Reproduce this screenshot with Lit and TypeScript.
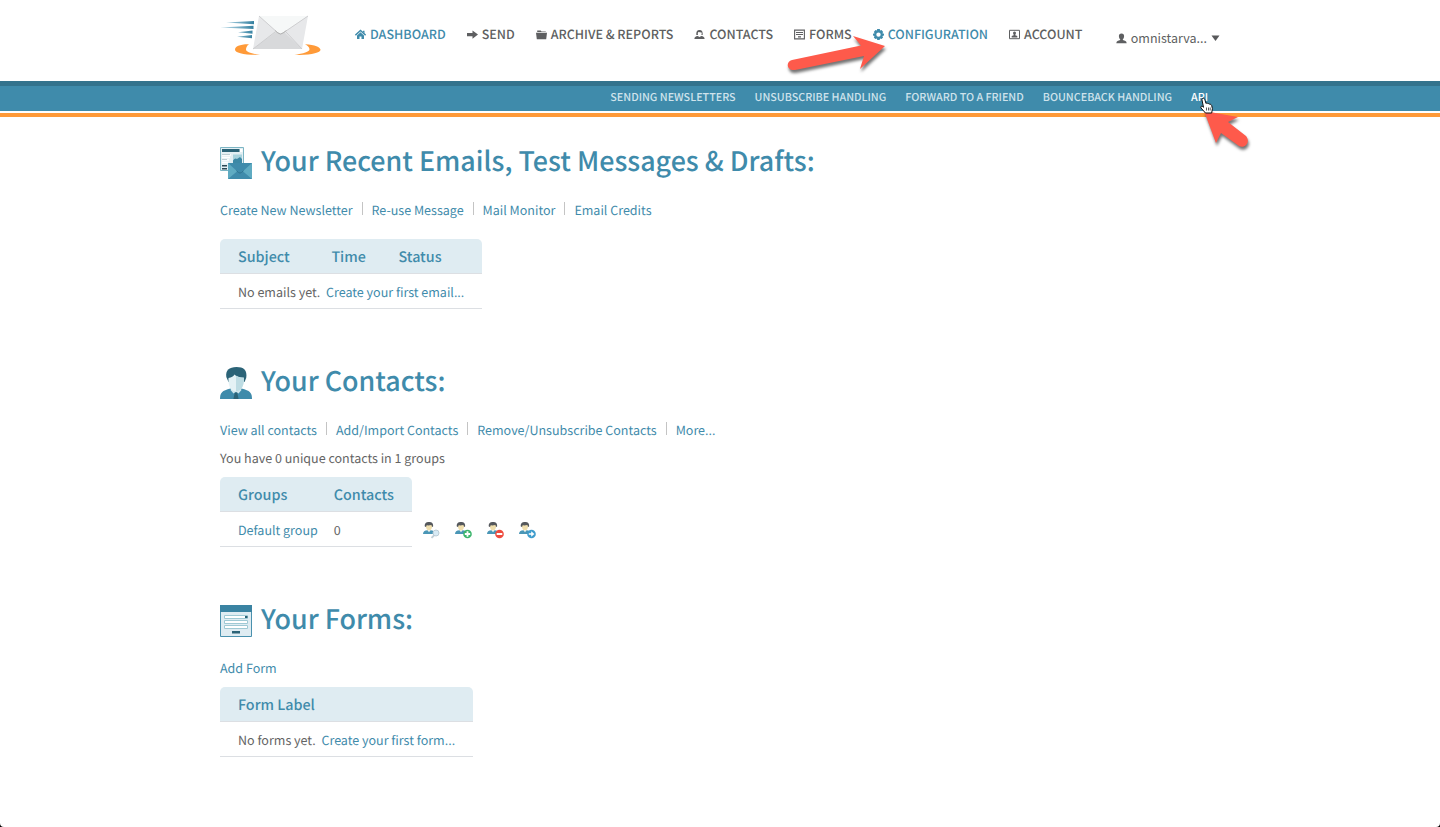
import { LitElement, html, css, svg } from "lit";
import { customElement } from "lit/decorators.js";

const icons = {
  home: svg`<path d="M0.400 6.200 5.500 1.400 10.600 6.200" fill="none" stroke="currentColor" stroke-width="1.400"/><path d="M8 1.800h1.500v2.500l-1.500-1.400zM2 6.400 5.500 3.200 9 6.400V10H6.500V7.500h-2V10H2z"/>`,
  send: svg`<path d="M0 4h5.500V1.400L11 5.600 5.500 9.800V7.200H0z"/>`,
  archive: svg`<path d="M1.200 3V1.400h3.500l.8 1h4.300V3zM0 3.800h11L10.200 10.200H.8z"/>`,
  contacts: svg`<path d="M2.300 6C2 2.800 3 .9 5.500.9s3.500 1.900 3.200 5.100H7.300c.5-1 .5-2 .2-2.600L4.500 3c-.9.700-.8 2-.4 3zM.4 10c0-1.900 1.200-2.700 3.300-3l1.800.9 1.800-.9c2.100.3 3.300 1.100 3.300 3z"/>`,
  forms: svg`<path d="M.6 1.100h9.800v8.800H.6z" fill="none" stroke="currentColor" stroke-width="1.100"/><path d="M2 3h7v1H2zM2 5h7v1H2zM4 7.200h3v1.200H4z"/>`,
  gear: svg`<path fill-rule="evenodd" d="M4.200 0h2.600l.3 1.500 1.400-.6 1.700 2-.9 1.300L11 4.800v1.600l-1.600.6.7 1.500L8.500 10l-1.400-.6-.5 1.600H4.300l-.5-1.600-1.400.6L.8 8.500 1.500 7 0 6.400V4.800l1.700-.6L.8 2.900l1.700-2 1.400.6zM5.500 3.400a2.200 2.200 0 1 0 0 4.400 2.200 2.200 0 0 0 0-4.400z"/>`,
  account: svg`<path d="M.5 1.300h10v8.400H.5z" fill="none" stroke="currentColor"/><circle cx="5.500" cy="4.100" r="1.500"/><path d="M4.700 5h1.600v1.200l2 .7v1.600H2.700V6.900l2-.7z"/>`,
  user: svg`<path d="M5.500.4c1.800 0 2.700 1.200 2.600 2.900-.1 1.500-.6 2.500-1.300 3.100v.6c2 .5 3.700.9 3.900 3.200H.3C.5 7.900 2.200 7.500 4.200 7v-.6C3.500 5.800 3 4.800 2.900 3.300 2.800 1.600 3.700.4 5.500.4z"/>`,
};

const NAV = [
  { label: "DASHBOARD", icon: icons.home, active: true },
  { label: "SEND", icon: icons.send },
  { label: "ARCHIVE & REPORTS", icon: icons.archive },
  { label: "CONTACTS", icon: icons.contacts },
  { label: "FORMS", icon: icons.forms },
  { label: "CONFIGURATION", icon: icons.gear, active: true },
  { label: "ACCOUNT", icon: icons.account },
];

const SUBNAV = [
  { label: "SENDING NEWSLETTERS" },
  { label: "UNSUBSCRIBE HANDLING" },
  { label: "FORWARD TO A FRIEND" },
  { label: "BOUNCEBACK HANDLING" },
  { label: "API", current: true },
];

const glyph = (content: unknown) =>
  html`<svg class="glyph" viewBox="0 0 11 11" aria-hidden="true">${content}</svg>`;

const person = (badge: unknown) => html`
  <svg viewBox="0 0 18 18" width="18" height="18" aria-hidden="true">
    <path d="M1 13c0-2.500 1.500-3.500 4.500-3.800h3C11.500 9.500 12.500 10.500 12.500 13z" fill="#4a96b6" />
    <path d="M5.500 9 7 11.300 8.500 9z" fill="#fff" />
    <path d="M3.800 4.500C3.800 2.500 5 2 7 2s3.200.8 3.200 2.500C10.200 7.500 8.800 9.600 7 9.600S3.800 7.500 3.800 4.500z" fill="#f0dfae" />
    <path d="M2.800 5.500C2.400 2.200 4.200 1 7 1s4.500 1.200 4.100 4.500L10 6c0-1-.3-1.600-.8-2-1.500.5-3.700.5-4.500.3L4 6z" fill="#55585c" />
    ${badge}
  </svg>
`;

const BADGES = [
  {
    label: "Search contacts",
    art: svg`<path d="m9.500 16.800 3-2.800" stroke="#c2ced5" stroke-width="1.800"/><circle cx="14" cy="12" r="3" fill="#d8eaf4" stroke="#bccdd6"/>`,
  },
  {
    label: "Add contacts",
    art: svg`<circle cx="13.500" cy="13" r="4.300" fill="#3cb56c"/><path d="M13.500 10.300v5.400M10.800 13h5.400" stroke="#fff" stroke-width="1.800"/>`,
  },
  {
    label: "Remove contacts",
    art: svg`<circle cx="13.500" cy="13" r="4.300" fill="#ee4b3e"/><path d="M10.700 13h5.600" stroke="#fff" stroke-width="2"/>`,
  },
  {
    label: "Move contacts",
    art: svg`<circle cx="13.500" cy="13" r="4.300" fill="#3f9ccc"/><path d="M10.800 12.200h2.400v-2l3.200 2.800-3.200 2.800v-2h-2.400z" fill="#fff"/>`,
  },
];

@customElement("app-root")
export class AppRoot extends LitElement {
  static styles = css`
    /* Sizes are set for Source Sans Pro; the adjust value keeps its x-height in the fallback. */
    :host {
      display: block;
      position: relative;
      min-height: 100vh;
      background: #fff;
      color: #646464;
      font-family: "Source Sans Pro", "Noto Sans CJK SC", "Noto Sans", sans-serif;
      font-size: 14px;
      font-size-adjust: 0.486;
      line-height: 28px;
      text-rendering: geometricPrecision;
    }
    a {
      color: #3f8bab;
      text-decoration: none;
    }
    svg {
      display: block;
      flex: none;
    }
    .wrap {
      box-sizing: border-box;
      max-width: 1000px;
      margin: 0 auto;
      position: relative;
    }
    .top {
      display: flex;
      align-items: flex-start;
      height: 81px;
    }
    .logo {
      margin-right: 34px;
      padding-top: 15px;
    }
    .nav {
      display: flex;
      gap: 21px;
      padding-top: 20px;
      font-weight: 500;
      white-space: nowrap;
    }
    .nav a,
    .user {
      display: flex;
      align-items: center;
      gap: 4px;
      color: #5e5f61;
    }
    .nav a.active {
      color: #3f8bab;
    }
    .glyph {
      width: 11px;
      height: 11px;
      fill: currentColor;
    }
    .user {
      margin: 24px 0 0 auto;
      padding: 0;
      border: 0;
      background: none;
      font: inherit;
      font-size-adjust: inherit;
      cursor: pointer;
      white-space: nowrap;
    }
    .bar {
      background: #3f8bab;
      border-top: 5px solid #34738d;
      border-bottom: 4px solid #ff9a38;
      box-shadow: inset 0 -2px #fff;
    }
    .subnav {
      display: flex;
      justify-content: flex-end;
      gap: 19px;
      padding: 0 12px 4px 0;
      font-size: 12px;
      font-weight: 500;
      line-height: 23px;
      white-space: nowrap;
    }
    .subnav a {
      color: #cfe3ec;
    }
    .subnav a.current {
      color: #fff;
    }
    .pointer-config,
    .pointer-api,
    .cursor {
      position: absolute;
      pointer-events: none;
      z-index: 2;
    }
    .pointer-config {
      left: 562px;
      top: 30px;
    }
    .pointer-api {
      left: 980px;
      top: 20px;
    }
    .cursor {
      left: 979px;
      top: 11px;
    }
    section {
      margin-bottom: 58px;
    }
    main {
      padding-top: 30px;
    }
    h2 {
      display: flex;
      gap: 9px;
      margin: 0 0 17px;
      color: #3f8bab;
      font-size: 30px;
      font-weight: 500;
      line-height: 26px;
    }
    .links {
      display: flex;
    }
    .links a + a {
      display: flex;
    }
    .links a + a::before {
      content: "";
      width: 1px;
      height: 13px;
      margin: 6px 9px 0;
      background: #c4c4c4;
    }
    p {
      margin: 0;
    }
    table {
      margin-top: 5px;
      border-collapse: separate;
      border-spacing: 0;
      white-space: nowrap;
    }
    table.spaced {
      margin-top: 15px;
    }
    th,
    td {
      padding: 2px 8px 0;
      border-bottom: 1px solid #dcdfe3;
      text-align: left;
      line-height: 32px;
    }
    th {
      background: #dfecf2;
      color: #3f8bab;
      font-size: 16px;
      font-weight: 500;
    }
    .first {
      padding-left: 18px;
    }
    .last {
      padding-right: 18px;
    }
    th.first {
      border-top-left-radius: 5px;
    }
    th.last {
      border-top-right-radius: 5px;
    }
    td a.after {
      margin-left: 3px;
    }
    td.tools {
      padding: 0 0 0 10px;
      border: 0;
    }
    .toolrow {
      display: flex;
      gap: 14px;
    }
    .corner {
      position: absolute;
      bottom: 0;
    }
    .corner.left {
      left: 0;
    }
    .corner.right {
      right: 0;
    }
  `;

  private logo() {
    return html`
      <a class="logo" href="#" aria-label="Home">
        <svg width="101" height="42" viewBox="0 0 101 42">
          <defs>
            <linearGradient id="speed">
              <stop offset="0" stop-color="#6fb0cc" stop-opacity="0.5" />
              <stop offset="1" stop-color="#337f9f" />
            </linearGradient>
          </defs>
          <path d="M6 7.600 34 6V9.300zM0 12.500 33.500 10.700v3.300zM18 17.200l14.500-1.800v3.300zM17 21.700l15-1.800v3.300z" fill="url(#speed)" />
          <path d="M29 29.200C20 29 15 31.500 15 34.500c0 3.500 9 5.600 25 5.300-8-1-14-2.800-14-5.300 0-2 1-4 3-5.300z" fill="#ff9a38" />
          <path d="M85 29.200c10 .5 15.500 3 15.500 5.600 0 3.200-10 5.600-26 5 9-1.200 15-3 15-5.500 0-2-2-4-4.500-5.100z" fill="#ff9a38" />
          <path d="M39 1h49l-6 33H33z" fill="#e7e8ea" />
          <path d="m33 34 23-17h8l18 17z" fill="#d8d9db" />
          <path d="M39 1h49L63 18q-2.500 2-5 0z" fill="#f6f8f8" />
          <path d="m39 1 19 17q2.500 2 5 0L88 1M33 34l22-17M82 34 66 17" fill="none" stroke="#c9cacc" stroke-width="0.900" />
          <path d="m55 15.500 3 2.500q2.500 2 5 0l3.500-2.500" fill="none" stroke="#b4b4b4" />
        </svg>
      </a>
    `;
  }

  private newsletterIcon() {
    return html`
      <svg width="32" height="32" viewBox="0 0 32 32" aria-hidden="true">
        <path d="M.5.500h23v23H.5z" fill="#e3eff3" stroke="#7cb5c4" />
        <path d="M2 2h17.500v3H2z" fill="#2b6377" />
        <path d="M20 2h2.500v3H20z" fill="#fff" />
        <path d="M2 8h9M2 13h7M2 10.500h8M2 15.500h6" stroke="#fff" stroke-width="1.500" />
        <path d="M2 7.500h8M2 12.500h5" stroke="#a3bac2" stroke-width="0.700" />
        <path d="M13 7.500h9V16h-9z" fill="#a9d3dd" />
        <path d="M13 13.500q2-3 4-1.500l3-2 2 2v4h-9z" fill="#3c88a5" />
        <path d="M2 18h5v1.500H2zM2 21h5v1.500H2z" fill="#2b4854" />
        <path d="M8 16h24v16H8z" fill="#5fabc2" />
        <path d="m8 32 9.500-8h5L32 32z" fill="#3f8bab" />
        <path d="m8 16 10.500 9.500q1.500 1.200 3 0L32 16z" fill="#3f8bab" />
        <path d="m16.500 23.700 2 1.800q1.500 1.200 3 0l2-1.800" fill="none" stroke="#2f7390" />
      </svg>
    `;
  }

  private contactIcon() {
    return html`
      <svg width="32" height="32" viewBox="0 0 32 32" aria-hidden="true">
        <path d="M0 32c0-6 2-8.500 10.500-10.500h11C30 23.500 32 26 32 32z" fill="#3f8bab" />
        <path d="M12 20h8l1.500 3-3 3.500L16 25l-2.500 1.500-3-3.500z" fill="#cfe6ec" />
        <path d="M14.800 25.500h2.400l1.400 6.500h-5.200z" fill="#2b6377" />
        <path d="M6.300 10C5.300 3.500 9 0 16.500 0 23.500 0 27.500 3 26.200 11L24.500 15h-16z" fill="#2b6377" />
        <path d="M8.500 11c3-.5 5-1.700 6-3.500 1.500 2 5 3 9.500 3.300.3 6.500-2 11-4 12.200-2.500 1.600-5.500 1.600-8 0-2-1.200-4-6-3.500-12z" fill="#e4f2f5" />
        <path d="M16 8.700c2 1.300 4.500 1.900 8 2.100.3 6.500-2 11-4 12.200q-2 1.200-4 1.200z" fill="#bddce3" />
      </svg>
    `;
  }

  private formIcon() {
    return html`
      <svg width="32" height="32" viewBox="0 0 32 32" aria-hidden="true">
        <path d="M.5.500h31v31H.5z" fill="#dfecf2" stroke="#4a91ae" />
        <path d="M0 0h32v7H0z" fill="#3a83a2" />
        <path d="M4.500 10.500h23v3h-23zM4.500 15.500h23v3h-23zM4.500 20.500h23v3h-23z" fill="#fff" stroke="#9fc9d4" />
        <path d="M25 11h2.500v2H25z" fill="#2b6377" />
        <path d="M12 26h8v2.500h-8z" fill="#2b6377" />
      </svg>
    `;
  }

  render() {
    return html`
      <header>
        <div class="wrap top">
          ${this.logo()}
          <nav class="nav" aria-label="Main">
            ${NAV.map(
              (item) => html`<a href="#" class=${item.active ? "active" : ""}>${glyph(item.icon)}${item.label}</a>`
            )}
          </nav>
          <button class="user" type="button">
            ${glyph(icons.user)}omnistarva...
            <svg width="9" height="6" viewBox="0 0 9 6" aria-hidden="true"><path d="M.5.500h8L4.500 6z" fill="#58595b" /></svg>
          </button>
          <svg class="pointer-config" width="106" height="50" viewBox="0 0 106 50" aria-hidden="true">
            <g filter="drop-shadow(1px 3px 1.500px rgb(0 0 0 / 0.550))">
              <path d="M10 30 79 15.500 71 6 103 16 78 39 82 26 13 40C5 41 3 32 10 30z" fill="#fe5a4b" />
            </g>
          </svg>
        </div>
        <div class="bar">
          <div class="wrap">
            <nav class="subnav" aria-label="Configuration">
              ${SUBNAV.map((item) => html`<a href="#" class=${item.current ? "current" : ""}>${item.label}</a>`)}
            </nav>
            <svg class="pointer-api" width="56" height="56" viewBox="0 0 56 56" aria-hidden="true">
              <g filter="drop-shadow(1px 3px 1.500px rgb(0 0 0 / 0.550))">
                <path d="M4 5 38 11 28 16 46 30C51 36 45 43 39 40L21 27 16 37z" fill="#fe5a4b" />
              </g>
            </svg>
            <svg class="cursor" width="16" height="18" viewBox="0 0 16 18" aria-hidden="true">
              <path d="M3.500 1.500c1-.7 2 0 2.300 1L7 6.500c.7-.7 1.700-.4 2 .3.700-.5 1.600-.2 1.800.6.900-.3 1.700.2 1.900 1.200l.7 3-.7 4.400H6.500L2 11c-.8-1.300.4-2.300 1.500-1.500l1 .8L3 3c-.2-.6 0-1.200.500-1.500z" fill="#fff" stroke="#111" />
              <path d="M7.500 10.500v3M9.500 10.500v3M11.200 10.500v3" stroke="#111" stroke-width="0.700" />
            </svg>
          </div>
        </div>
      </header>
      <main class="wrap">
        <section>
          <h2>${this.newsletterIcon()}Your Recent Emails, Test Messages &amp; Drafts:</h2>
          <nav class="links" aria-label="Emails">
            <a href="#">Create New Newsletter</a><a href="#">Re-use Message</a><a href="#">Mail Monitor</a><a href="#">Email Credits</a>
          </nav>
          <table class="spaced">
            <thead>
              <tr><th class="first">Subject</th><th>Time</th><th class="last">Status</th></tr>
            </thead>
            <tbody>
              <tr><td class="first last" colspan="3">No emails yet. <a class="after" href="#">Create your first email...</a></td></tr>
            </tbody>
          </table>
        </section>
        <section>
          <h2>${this.contactIcon()}Your Contacts:</h2>
          <nav class="links" aria-label="Contacts">
            <a href="#">View all contacts</a><a href="#">Add/Import Contacts</a><a href="#">Remove/Unsubscribe Contacts</a><a href="#">More...</a>
          </nav>
          <p>You have 0 unique contacts in 1 groups</p>
          <table>
            <thead>
              <tr><th class="first">Groups</th><th class="last">Contacts</th></tr>
            </thead>
            <tbody>
              <tr>
                <td class="first"><a href="#">Default group</a></td>
                <td class="last">0</td>
                <td class="tools">
                  <div class="toolrow">
                    ${BADGES.map((b) => html`<a href="#" aria-label=${b.label}>${person(b.art)}</a>`)}
                  </div>
                </td>
              </tr>
            </tbody>
          </table>
        </section>
        <section>
          <h2>${this.formIcon()}Your Forms:</h2>
          <nav class="links" aria-label="Forms"><a href="#">Add Form</a></nav>
          <table>
            <thead>
              <tr><th class="first last">Form Label</th></tr>
            </thead>
            <tbody>
              <tr><td class="first last">No forms yet. <a class="after" href="#">Create your first form...</a></td></tr>
            </tbody>
          </table>
        </section>
      </main>
      <svg class="corner left" width="4" height="4" viewBox="0 0 4 4" aria-hidden="true"><path d="M0 0q0 4 4 4H0z" /></svg>
      <svg class="corner right" width="4" height="4" viewBox="0 0 4 4" aria-hidden="true"><path d="M4 0q0 4-4 4h4z" /></svg>
    `;
  }
}
